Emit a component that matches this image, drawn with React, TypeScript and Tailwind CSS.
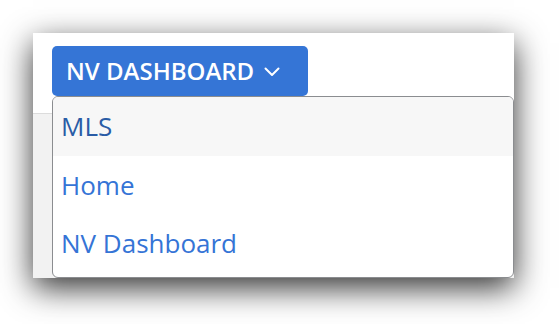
import React from "react";

export default function App() {
  const font = { fontFamily: '"Open Sans", "Noto Sans", sans-serif' };
  return (
    <div className="w-[560px] h-[324px] bg-white pt-[33px] pl-[33px]" style={font}>
      <div className="relative w-[481px] h-[245px] bg-white flex flex-col overflow-hidden shadow-[0_10px_30px_rgba(0,0,0,0.8)]">
        <div className="h-[81px] shrink-0 border-b border-[#dcdcdc] pl-[19px] pt-[13px]">
          <button className="flex items-center w-[256px] h-[50px] rounded-[5px] bg-[#3575d6] text-white pl-[14px] text-[24px] font-semibold">
            <span>NV DASHBOARD</span>
            <svg className="ml-[10px] mt-[2px]" width="16" height="10" viewBox="0 0 16 10" fill="none">
              <path d="M1.5 1.5 L8 8 L14.5 1.5" stroke="white" strokeWidth="2" strokeLinecap="round" strokeLinejoin="round" />
            </svg>
          </button>
        </div>
        <div className="flex-1 bg-[#f2f2f2]" />
        <div className="absolute left-[19px] top-[63px] right-0 bottom-0 bg-white border-[1.5px] border-[#8b8d90] rounded-[6px] overflow-hidden flex flex-col">
          <div className="h-[59px] shrink-0 bg-[#f7f7f7] flex items-center pl-[8px] text-[26px] text-[#2a5ca6]">MLS</div>
          <div className="h-[58px] shrink-0 flex items-center pl-[8px] text-[26px] text-[#3574d6]">Home</div>
          <div className="h-[58px] shrink-0 flex items-center pl-[8px] text-[26px] text-[#3574d6]">NV Dashboard</div>
        </div>
      </div>
    </div>
  );
}
